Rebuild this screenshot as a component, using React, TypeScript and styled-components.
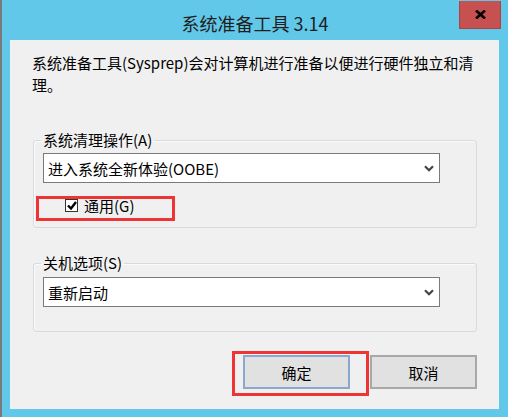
import React from 'react';
import styled, { createGlobalStyle } from 'styled-components';

const GlobalStyle = createGlobalStyle`
  html, body {
    margin : 0;
    padding : 0;
    background : #ffffff;
  }
  body {
    font-family : "Noto Sans CJK SC", "Microsoft YaHei", sans-serif;
    color : #000;
  }
`;

const Window = styled.div`
  width : 508px;
  height : 417px;
  box-sizing : border-box;
  background : #62c8e9;
  border-left : 2px solid #7a7a7a;
  display : flex;
  flex-direction : column;
`;

const TitleBar = styled.div`
  height : 40px;
  display : grid;
  grid-template-columns : 1fr auto 1fr;
  align-items : center;
`;

const Title = styled.div`
  grid-column : 2;
  font-size : 18px;
  color : #1e1e1e;
  padding-top : 5px;
  white-space : nowrap;
`;

const CloseButton = styled.div`
  grid-column : 3;
  justify-self : end;
  align-self : start;
  margin-top : 1px;
  margin-right : 7px;
  width : 42px;
  height : 28px;
  box-sizing : border-box;
  background : #c75050;
  border : 1px solid #a84444;
  border-top : none;
  display : flex;
  align-items : center;
  justify-content : center;

  svg {
    width : 11px;
    height : 9px;
  }
`;

const Client = styled.div`
  margin : 0 9px 8px 8px;
  height : 369px;
  box-sizing : border-box;
  background : #f0f0f0;
  padding : 12px 22px 0 23px;
`;

const Description = styled.p`
  margin : 0;
  font-size : 15px;
  line-height : 22px;
  margin-left : -1px;
`;

const GroupBox = styled.fieldset<{ $gap: number; $bottom: number; $top: number }>`
  margin : ${(p) => p.$gap}px 0 0 0;
  padding : ${(p) => p.$top}px 36px ${(p) => p.$bottom}px 9px;
  border : 1px solid #d5dbe1;
  border-radius : 3px;
  box-shadow : inset 1px 1px 0 #fbfbfb;
  min-width : 0;
`;

const Legend = styled.legend`
  font-size : 15px;
  line-height : 20px;
  padding : 0 2px;
  margin-left : -2px;
  color : #000;
`;

const Select = styled.div`
  height : 30px;
  box-sizing : border-box;
  background : #ffffff;
  border : 1px solid #7a7a7a;
  display : flex;
  align-items : center;
  justify-content : space-between;
  padding : 0 5px 0 4px;
  font-size : 15px;

  svg {
    width : 10px;
    height : 7px;
  }
`;

const Highlight = styled.div`
  border : 3px solid #ee3535;
  box-sizing : border-box;
`;

const CheckHighlight = styled(Highlight)`
  width : 139px;
  height : 25px;
  margin : 13px 0 0 -7px;
  padding : 0 0 6px 26px;
  display : flex;
  align-items : center;
`;

const CheckBox = styled.span`
  width : 13px;
  height : 13px;
  box-sizing : border-box;
  border : 1px solid #333;
  background : #fff;
  display : flex;
  align-items : center;
  justify-content : center;

  svg {
    width : 10px;
    height : 9px;
  }
`;

const CheckLabel = styled.span`
  font-size : 15px;
  margin-left : 6px;
  line-height : 18px;
`;

const Footer = styled.div`
  display : flex;
  justify-content : flex-end;
  align-items : flex-start;
  gap : 1px;
  margin-top : 19px;
`;

const ButtonHighlight = styled(Highlight)`
  padding : 1px 16px 4px 8px;
`;

const DialogButton = styled.div<{ $primary?: boolean }>`
  width : 107px;
  height : 34px;
  box-sizing : border-box;
  background : #e1e1e1;
  border : 2px solid ${(p) => (p.$primary ? '#86a9cd' : '#a8a8a8')};
  display : flex;
  align-items : center;
  justify-content : center;
  font-size : 15px;
  margin-top : ${(p) => (p.$primary ? 0 : 4)}px;
`;

const Chevron = () => (
  <svg viewBox="0 0 10 7">
    <path d="M1 1.2 L5 5.2 L9 1.2" fill="none" stroke="#444" strokeWidth="2.2" />
  </svg>
);

export default function App() {
  return (
    <>
      <GlobalStyle />
      <Window>
        <TitleBar>
          <Title>系统准备工具 3.14</Title>
          <CloseButton>
            <svg viewBox="0 0 11 9">
              <path d="M1 0.5 L10 8.5 M10 0.5 L1 8.5" stroke="#000" strokeWidth="2.6" />
            </svg>
          </CloseButton>
        </TitleBar>

        <Client>
          <Description>
            系统准备工具(Sysprep)会对计算机进行准备以便进行硬件独立和清
            <br />
            理。
          </Description>

          <GroupBox $gap={34} $top={3} $bottom={6}>
            <Legend>系统清理操作(A)</Legend>
            <Select>
              <span>进入系统全新体验(OOBE)</span>
              <Chevron />
            </Select>
            <CheckHighlight>
              <CheckBox>
                <svg viewBox="0 0 10 9">
                  <path d="M1 4.5 L4 7.5 L9 1" fill="none" stroke="#000" strokeWidth="2.4" />
                </svg>
              </CheckBox>
              <CheckLabel>通用(G)</CheckLabel>
            </CheckHighlight>
          </GroupBox>

          <GroupBox $gap={25} $top={4} $bottom={24}>
            <Legend>关机选项(S)</Legend>
            <Select>
              <span>重新启动</span>
              <Chevron />
            </Select>
          </GroupBox>

          <Footer>
            <ButtonHighlight>
              <DialogButton $primary>确定</DialogButton>
            </ButtonHighlight>
            <DialogButton>取消</DialogButton>
          </Footer>
        </Client>
      </Window>
    </>
  );
}
